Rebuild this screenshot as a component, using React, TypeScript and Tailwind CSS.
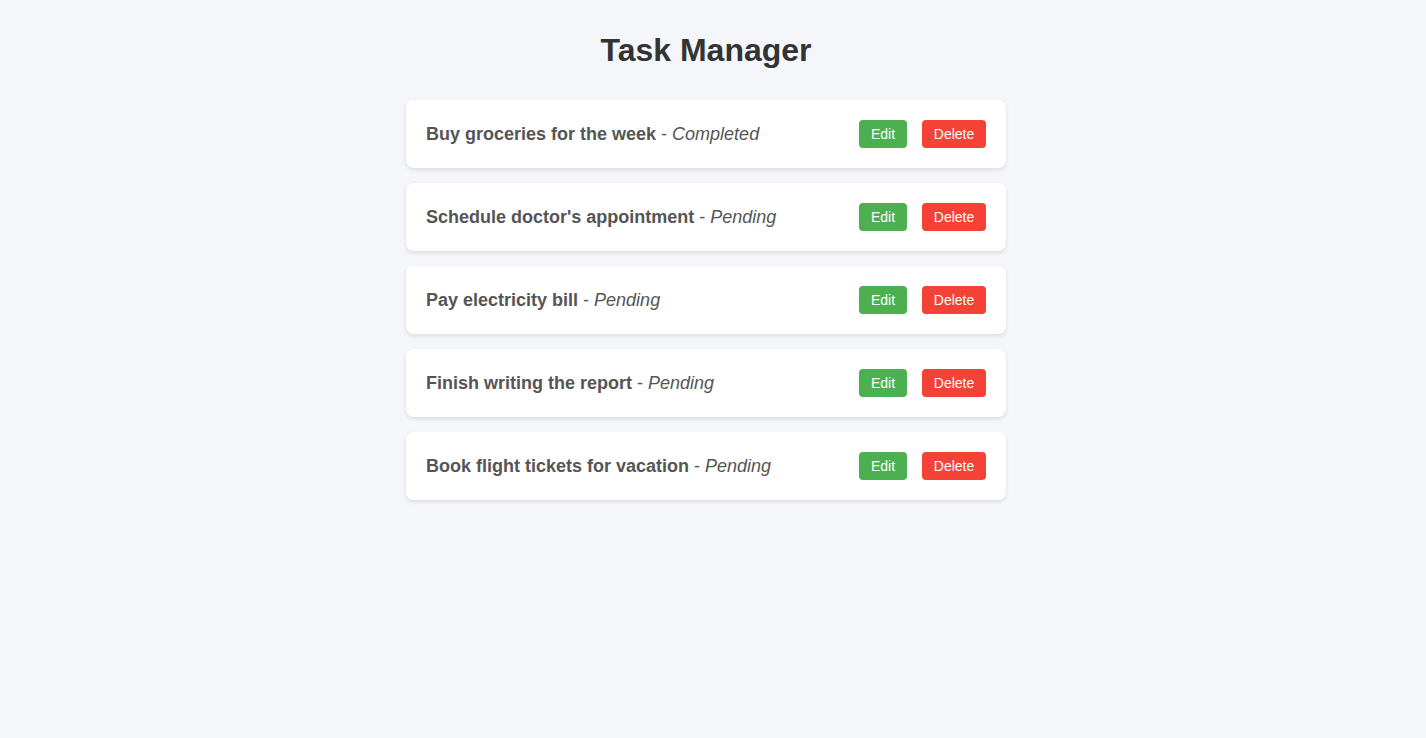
import React from "react";

const tasks = [
  { title: "Buy groceries for the week", status: "Completed" },
  { title: "Schedule doctor's appointment", status: "Pending" },
  { title: "Pay electricity bill", status: "Pending" },
  { title: "Finish writing the report", status: "Pending" },
  { title: "Book flight tickets for vacation", status: "Pending" },
];

export default function App() {
  return (
    <div
      className="min-h-screen bg-[#f4f6f9] pt-[32px] pb-5 pr-[14px]"
      style={{ fontFamily: '"Liberation Sans", Arial, sans-serif' }}
    >
      <h1 className="text-center text-[32px] leading-[37px] font-bold text-[#333] mb-[31px]">
        Task Manager
      </h1>
      <div className="w-[600px] mx-auto flex flex-col gap-[15px]">
        {tasks.map((t) => (
          <div
            key={t.title}
            className="bg-white rounded-lg shadow-[0_2px_4px_rgba(0,0,0,0.1)] h-[68px] px-5 flex items-center justify-between"
          >
            <span className="text-[18px] leading-[21px] text-[#555] pt-[1px]">
              <span className="font-bold">{t.title}</span> - <em>{t.status}</em>
            </span>
            <div className="flex items-center gap-[15px]">
              <button className="bg-[#4caf50] text-white text-[14px] leading-4 py-[6px] w-[48px] rounded">
                Edit
              </button>
              <button className="bg-[#f44336] text-white text-[14px] leading-4 py-[6px] w-[64px] rounded">
                Delete
              </button>
            </div>
          </div>
        ))}
      </div>
    </div>
  );
}
